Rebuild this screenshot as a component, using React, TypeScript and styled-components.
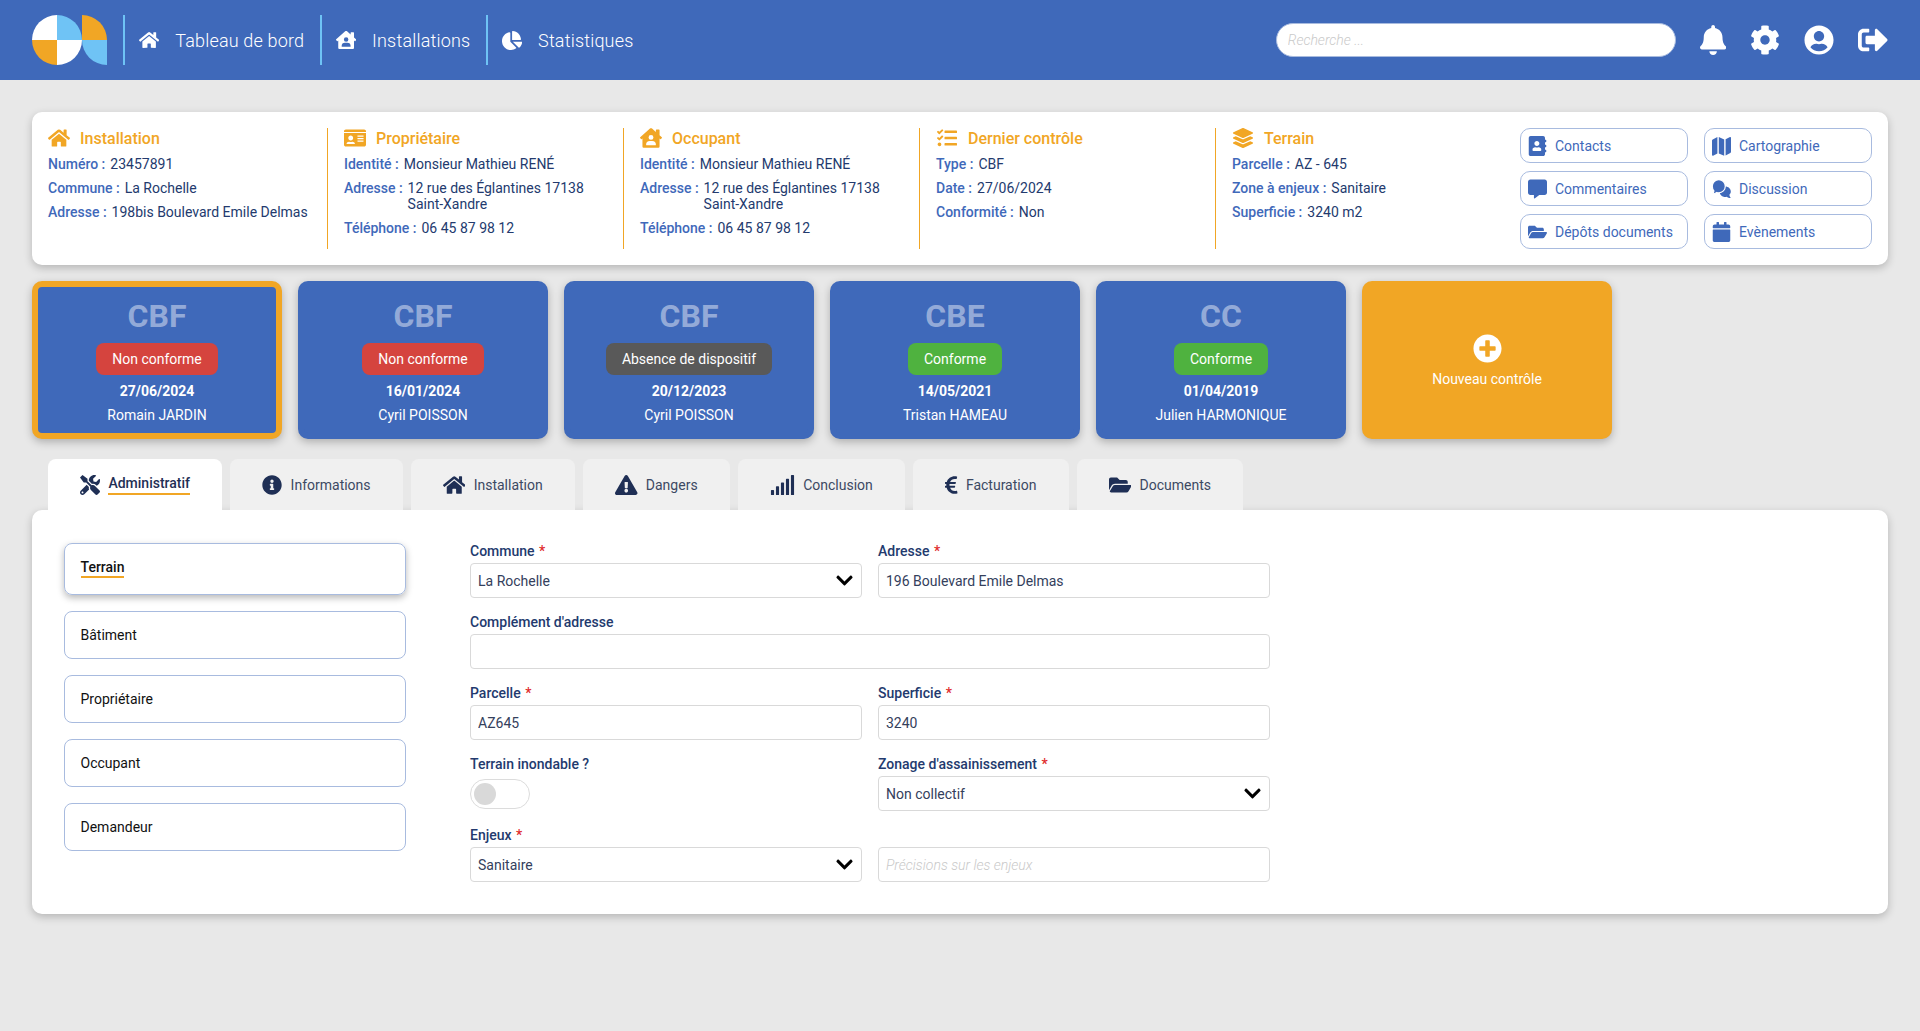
import React from "react";
import styled, { createGlobalStyle } from "styled-components";
import {
  FaHome, FaHouseUser, FaChartPie, FaBell, FaCog, FaUserCircle, FaSignOutAlt, FaIdCard, FaTasks,
  FaLayerGroup, FaAddressBook, FaCommentAlt, FaFolderOpen, FaCalendar, FaPlusCircle,
  FaTools, FaInfoCircle, FaExclamationTriangle, FaSignal, FaEuroSign, FaChevronDown,
} from "react-icons/fa";

const BLUE = "#3f69ba";
const ORANGE = "#f1a625";
const SKY = "#6fc3f5";
const NAVY = "#233a6e";

const Global = createGlobalStyle`
  * { box-sizing: border-box; }
  html, body { margin: 0; padding: 0; background: #e8e8e8; }
  body { font-family: Roboto, "Liberation Sans", sans-serif; font-size: 14px; color: ${NAVY}; }
  input, select { font-family: inherit; }
`;

const Page = styled.div`min-height: 100vh;`;

const Header = styled.header`
  height: 80px;
  background: ${BLUE};
  display: flex;
  align-items: center;
  padding: 0 32px;
`;
const LogoSvg = styled.svg`width: 75px; height: 50px; flex: none; margin-right: 16px;`;
const Nav = styled.nav`display: flex; align-items: center;`;
const NavItem = styled.a`
  height: 50px;
  display: flex;
  align-items: center;
  gap: 16px;
  padding: 0 15.5px 0 14px;
  border-left: 2px solid ${SKY};
  color: #fff;
  font-size: 18px;
  letter-spacing: 0.01em;
  font-weight: 300;
`;
const IconBox = styled.span<{ $w: number; $h: number }>`
  flex: none;
  display: flex;
  svg { width: ${(p) => p.$w}px; height: ${(p) => p.$h}px; display: block; }
`;
const HeaderRight = styled.div`
  margin-left: auto;
  display: flex;
  align-items: center;
  gap: 24px;
  color: #fff;
`;
const Search = styled.input`
  width: 400px;
  height: 34px;
  border-radius: 17px;
  border: 1px solid #a8bbdf;
  background: #fff;
  padding: 0 11px;
  font-size: 14px;
  outline: none;
  &::placeholder { color: #c9c9c9; font-style: italic; font-weight: 300; }
`;

const Main = styled.main`padding: 32px;`;

const InfoCard = styled.section`
  background: #fff;
  border-radius: 10px;
  box-shadow: 0 3px 8px rgba(0, 0, 0, 0.22);
  padding: 16px;
  display: flex;
  gap: 16px;
  height: 153px;
`;
const InfoCol = styled.div<{ $last?: boolean }>`
  width: ${(p) => (p.$last ? "272px" : "280px")};
  flex: none;
  border-right: ${(p) => (p.$last ? "none" : `1px solid ${ORANGE}`)};
`;
const InfoTitle = styled.h3`
  margin: -1px 0 7px;
  height: 22px;
  display: flex;
  align-items: center;
  gap: 10px;
  color: ${ORANGE};
  font-size: 16px;
  font-weight: 500;
  svg { flex: none; width: 22px; height: 20px; }
`;
const InfoRow = styled.div`
  display: flex;
  gap: 5px;
  line-height: 16px;
  margin-bottom: 8px;
  font-size: 14px;
  color: ${NAVY};
`;
const InfoLabel = styled.span`color: ${BLUE}; font-weight: 500; white-space: nowrap;`;
const ActionGrid = styled.div`
  display: grid;
  grid-template-columns: 168px 168px;
  grid-auto-rows: 35px;
  gap: 8px 16px;
`;
const ActionBtn = styled.a`
  display: flex;
  align-items: center;
  gap: 8px;
  padding-left: 7px;
  border: 1px solid #a8bbdf;
  border-radius: 10px;
  color: ${BLUE};
  font-size: 14px;
`;
const ActionIcon = styled.span`
  width: 19px;
  height: 20px;
  display: flex;
  align-items: center;
  svg { width: 19px; height: 20px; display: block; }
`;

const Vignettes = styled.div`display: flex; gap: 16px; margin-top: 16px;`;
const Vignette = styled.div<{ $selected?: boolean }>`
  width: 250px;
  height: 158px;
  background: ${BLUE};
  border: 6px solid ${(p) => (p.$selected ? ORANGE : BLUE)};
  border-radius: 10px;
  box-shadow: 0 3px 8px rgba(0, 0, 0, 0.25);
  display: flex;
  flex-direction: column;
  align-items: center;
  color: #fff;
  padding-top: 9px;
`;
const VigTitle = styled.div`
  font-size: 32px;
  font-weight: 700;
  line-height: 40px;
  color: rgba(255, 255, 255, 0.45);
`;
const Badge = styled.div<{ $tone: "red" | "green" | "grey" }>`
  margin-top: 7px;
  height: 32px;
  padding: 0 16px;
  border-radius: 8px;
  display: flex;
  align-items: center;
  font-size: 14px;
  background: ${(p) => (p.$tone === "red" ? "#d5443e" : p.$tone === "green" ? "#4fb23f" : "#595959")};
`;
const VigDate = styled.div`margin-top: 4px; line-height: 24px; font-weight: 700; font-size: 14px;`;
const VigName = styled.div`line-height: 24px; font-size: 14px;`;
const NewCard = styled.div`
  width: 250px;
  height: 158px;
  background: ${ORANGE};
  border-radius: 10px;
  box-shadow: 0 3px 8px rgba(0, 0, 0, 0.25);
  display: flex;
  flex-direction: column;
  align-items: center;
  justify-content: center;
  gap: 8px;
  color: #fff;
  font-size: 14px;
`;

const Tabs = styled.div`display: flex; gap: 8px; margin-top: 20px; padding-left: 16px;`;
const Tab = styled.div<{ $active?: boolean }>`
  height: 51px;
  padding: 0 32.15px;
  display: flex;
  align-items: center;
  gap: 8.3px;
  border-radius: 8px 8px 0 0;
  background: ${(p) => (p.$active ? "#fff" : "#f0f0f0")};
  color: #1f2f55;
  font-size: 14px;
`;
const TabText = styled.span<{ $active?: boolean }>`
  color: ${(p) => (p.$active ? "#1f2f55" : "#3c4963")};
  font-weight: ${(p) => (p.$active ? 500 : 400)};
  ${(p) => p.$active && `border-bottom: 2px solid ${ORANGE}; padding-bottom: 2px; line-height: 16px;`}
`;

const Panel = styled.section`
  background: #fff;
  border-radius: 10px;
  box-shadow: 0 3px 8px rgba(0, 0, 0, 0.22);
  padding: 32px;
  display: flex;
  gap: 64px;
  height: 404px;
`;
const Side = styled.div`width: 342px; flex: none; display: flex; flex-direction: column; gap: 16px; padding-top: 1px;`;
const SideItem = styled.div<{ $active?: boolean }>`
  height: ${(p) => (p.$active ? "52px" : "48px")};
  border: 1px solid #a8bbdf;
  border-radius: 8px;
  padding-left: 15.5px;
  display: flex;
  align-items: center;
  color: #111;
  font-size: 14px;
  ${(p) => p.$active && `box-shadow: 0 3px 7px rgba(0,0,0,.28); font-weight: 500; padding-bottom: 2px;`}
`;
const SideText = styled.span<{ $active?: boolean }>`
  ${(p) => p.$active && `border-bottom: 2px solid ${ORANGE}; line-height: 17px;`}
`;

const Form = styled.form`
  width: 800px;
  flex: none;
  display: grid;
  grid-template-columns: 392px 392px;
  gap: 15px 16px;
  align-content: start;
`;
const Field = styled.div<{ $wide?: boolean }>`
  ${(p) => p.$wide && "grid-column: 1 / 3;"}
`;
const Label = styled.label`
  display: block;
  height: 21px;
  line-height: 18px;
  font-size: 14px;
  font-weight: 500;
  color: ${NAVY};
`;
const Star = styled.span`color: #e02b2b; margin-left: 1px;`;
const Input = styled.input`
  width: 100%;
  height: 35px;
  display: block;
  padding: 0 7px;
  border: 1px solid #d9d9d9;
  border-radius: 4px;
  background: #fff;
  font-size: 14px;
  color: #34405c;
  outline: none;
  &::placeholder { color: #c9c9c9; font-style: italic; font-weight: 300; }
`;
const SelectWrap = styled.div`position: relative; height: 35px; color: #000;`;
const Select = styled.select`
  width: 100%;
  height: 35px;
  display: block;
  appearance: none;
  padding: 0 7px;
  border: 1px solid #d9d9d9;
  border-radius: 4px;
  background: #fff;
  font-size: 14px;
  color: #34405c;
  outline: none;
`;
const Chevron = styled.span`
  position: absolute;
  right: 8px;
  top: 8px;
  display: flex;
  pointer-events: none;
`;
const ToggleRow = styled.div`height: 35px; display: flex; align-items: center;`;
const Toggle = styled.div`
  width: 60px;
  height: 30px;
  border: 1px solid #dcdcdc;
  border-radius: 15px;
  padding-left: 3px;
  display: flex;
  align-items: center;
`;
const Knob = styled.div`width: 22px; height: 22px; border-radius: 50%; background: #d9d9d9;`;

const Logo = () => (
  <LogoSvg viewBox="0 0 75 50">
    <path d="M25 25V0A25 25 0 0 0 0 25Z" fill="#fff" />
    <path d="M25 25V0A25 25 0 0 1 50 25Z" fill={SKY} />
    <path d="M25 25H0A25 25 0 0 0 25 50Z" fill={ORANGE} />
    <path d="M25 25H50A25 25 0 0 1 25 50Z" fill="#fff" />
    <path d="M50 0A25 25 0 0 1 75 25H50Z" fill={ORANGE} />
    <path d="M50 25H75V50A25 25 0 0 1 50 25Z" fill={SKY} />
  </LogoSvg>
);

const MapIcon = () => (
  <svg viewBox="0 0 19 20" fill={BLUE}>
    <path d="M0 4.5c0-.5.3-.9.7-1.1L5.4 1v16.4l-4.3 2.3c-.5.2-1.1-.1-1.1-.7Z" />
    <path d="M6.8 1l5.4 2.4V19.8L6.8 17.4Z" />
    <path d="M13.6 3.2 18 1c.5-.2 1 .1 1 .7V15.8c0 .5-.3.9-.7 1.1l-4.7 2.6Z" />
  </svg>
);

const ChatIcon = () => (
  <svg viewBox="0 0 19 20" fill={BLUE}>
    <path d="M13.2 7.5c3.2 0 5.6 2.2 5.6 5 0 1.3-.5 2.4-1.4 3.3.1 1.2.7 2.4 1.4 3.2-1.8 0-3.2-.6-4.2-1.3-.5.1-.9.2-1.4.2-3 0-5.5-2.2-5.5-5 0-2.9 2.5-5.4 5.5-5.4Z" />
    <path
      d="M6.8.7c3.6 0 6.5 2.9 6.5 6.5s-2.9 6.6-6.5 6.6c-.7 0-1.4-.1-2-.3-1 .9-2.4 1.6-4.2 1.6.7-.9 1.2-1.9 1.3-3.2C.9 10.7.3 9 .3 7.2.3 3.6 3.2.7 6.8.7Z"
      stroke="#fff"
      strokeWidth="1.2"
    />
  </svg>
);

const infos = [
  { title: "Installation", icon: <FaHome />, rows: [["Numéro :", "23457891"], ["Commune :", "La Rochelle"], ["Adresse :", "198bis Boulevard Emile Delmas"]] },
  { title: "Propriétaire", icon: <FaIdCard />, rows: [["Identité :", "Monsieur Mathieu RENÉ"], ["Adresse :", "12 rue des Églantines 17138\nSaint-Xandre"], ["Téléphone :", "06 45 87 98 12"]] },
  { title: "Occupant", icon: <FaHouseUser />, rows: [["Identité :", "Monsieur Mathieu RENÉ"], ["Adresse :", "12 rue des Églantines 17138\nSaint-Xandre"], ["Téléphone :", "06 45 87 98 12"]] },
  { title: "Dernier contrôle", icon: <FaTasks />, rows: [["Type :", "CBF"], ["Date :", "27/06/2024"], ["Conformité :", "Non"]] },
  { title: "Terrain", icon: <FaLayerGroup />, rows: [["Parcelle :", "AZ - 645"], ["Zone à enjeux :", "Sanitaire"], ["Superficie :", "3240 m2"]] },
];

const actions = [
  { t: "Contacts", i: <FaAddressBook /> },
  { t: "Cartographie", i: <MapIcon /> },
  { t: "Commentaires", i: <FaCommentAlt /> },
  { t: "Discussion", i: <ChatIcon /> },
  { t: "Dépôts documents", i: <FaFolderOpen /> },
  { t: "Evènements", i: <FaCalendar /> },
];

const vignettes: { k: string; b: string; tone: "red" | "green" | "grey"; d: string; n: string; sel?: boolean }[] = [
  { k: "CBF", b: "Non conforme", tone: "red", d: "27/06/2024", n: "Romain JARDIN", sel: true },
  { k: "CBF", b: "Non conforme", tone: "red", d: "16/01/2024", n: "Cyril POISSON" },
  { k: "CBF", b: "Absence de dispositif", tone: "grey", d: "20/12/2023", n: "Cyril POISSON" },
  { k: "CBE", b: "Conforme", tone: "green", d: "14/05/2021", n: "Tristan HAMEAU" },
  { k: "CC", b: "Conforme", tone: "green", d: "01/04/2019", n: "Julien HARMONIQUE" },
];

const tabs = [
  { t: "Administratif", i: <FaTools />, w: 20, a: true },
  { t: "Informations", i: <FaInfoCircle />, w: 20 },
  { t: "Installation", i: <FaHome />, w: 22.5 },
  { t: "Dangers", i: <FaExclamationTriangle />, w: 22.5 },
  { t: "Conclusion", i: <FaSignal />, w: 25 },
  { t: "Facturation", i: <FaEuroSign />, w: 12.5 },
  { t: "Documents", i: <FaFolderOpen />, w: 22.5 },
];

const Req = ({ children }: { children: React.ReactNode }) => (
  <Label>{children} <Star>*</Star></Label>
);

const Sel = ({ value }: { value: string }) => (
  <SelectWrap>
    <Select defaultValue={value}><option>{value}</option></Select>
    <Chevron><FaChevronDown size={19} /></Chevron>
  </SelectWrap>
);

export default function App() {
  return (
    <Page>
      <Global />
      <Header>
        <Logo />
        <Nav>
          <NavItem><IconBox $w={20.25} $h={18}><FaHome /></IconBox>Tableau de bord</NavItem>
          <NavItem><IconBox $w={20.25} $h={18}><FaHouseUser /></IconBox>Installations</NavItem>
          <NavItem><IconBox $w={20.2} $h={19}><FaChartPie /></IconBox>Statistiques</NavItem>
        </Nav>
        <HeaderRight>
          <Search placeholder="Recherche ..." />
          <IconBox $w={26.25} $h={30}><FaBell /></IconBox>
          <IconBox $w={30} $h={30}><FaCog /></IconBox>
          <IconBox $w={30} $h={30}><FaUserCircle /></IconBox>
          <IconBox $w={30} $h={30}><FaSignOutAlt /></IconBox>
        </HeaderRight>
      </Header>
      <Main>
        <InfoCard>
          {infos.map((c, idx) => (
            <InfoCol key={c.title} $last={idx === 4}>
              <InfoTitle>{c.icon}{c.title}</InfoTitle>
              {c.rows.map(([l, v]) => (
                <InfoRow key={l}>
                  <InfoLabel>{l}</InfoLabel>
                  <span>{v.split("\n").map((s, i) => (<React.Fragment key={s}>{i > 0 && <br />}{s}</React.Fragment>))}</span>
                </InfoRow>
              ))}
            </InfoCol>
          ))}
          <ActionGrid>
            {actions.map((a) => (
              <ActionBtn key={a.t}><ActionIcon>{a.i}</ActionIcon>{a.t}</ActionBtn>
            ))}
          </ActionGrid>
        </InfoCard>
        <Vignettes>
          {vignettes.map((v) => (
            <Vignette key={v.d} $selected={v.sel}>
              <VigTitle>{v.k}</VigTitle>
              <Badge $tone={v.tone}>{v.b}</Badge>
              <VigDate>{v.d}</VigDate>
              <VigName>{v.n}</VigName>
            </Vignette>
          ))}
          <NewCard>
            <FaPlusCircle size={29} />
            Nouveau contrôle
          </NewCard>
        </Vignettes>
        <Tabs>
          {tabs.map((t) => (
            <Tab key={t.t} $active={t.a}>
              <IconBox $w={t.w} $h={20}>{t.i}</IconBox>
              <TabText $active={t.a}>{t.t}</TabText>
            </Tab>
          ))}
        </Tabs>
        <Panel>
          <Side>
            <SideItem $active><SideText $active>Terrain</SideText></SideItem>
            <SideItem><SideText>Bâtiment</SideText></SideItem>
            <SideItem><SideText>Propriétaire</SideText></SideItem>
            <SideItem><SideText>Occupant</SideText></SideItem>
            <SideItem><SideText>Demandeur</SideText></SideItem>
          </Side>
          <Form>
            <Field><Req>Commune</Req><Sel value="La Rochelle" /></Field>
            <Field><Req>Adresse</Req><Input defaultValue="196 Boulevard Emile Delmas" /></Field>
            <Field $wide><Label>Complément d'adresse</Label><Input /></Field>
            <Field><Req>Parcelle</Req><Input defaultValue="AZ645" /></Field>
            <Field><Req>Superficie</Req><Input defaultValue="3240" /></Field>
            <Field><Label>Terrain inondable ?</Label><ToggleRow><Toggle><Knob /></Toggle></ToggleRow></Field>
            <Field><Req>Zonage d'assainissement</Req><Sel value="Non collectif" /></Field>
            <Field><Req>Enjeux</Req><Sel value="Sanitaire" /></Field>
            <Field><Label>&nbsp;</Label><Input placeholder="Précisions sur les enjeux" /></Field>
          </Form>
        </Panel>
      </Main>
    </Page>
  );
}
